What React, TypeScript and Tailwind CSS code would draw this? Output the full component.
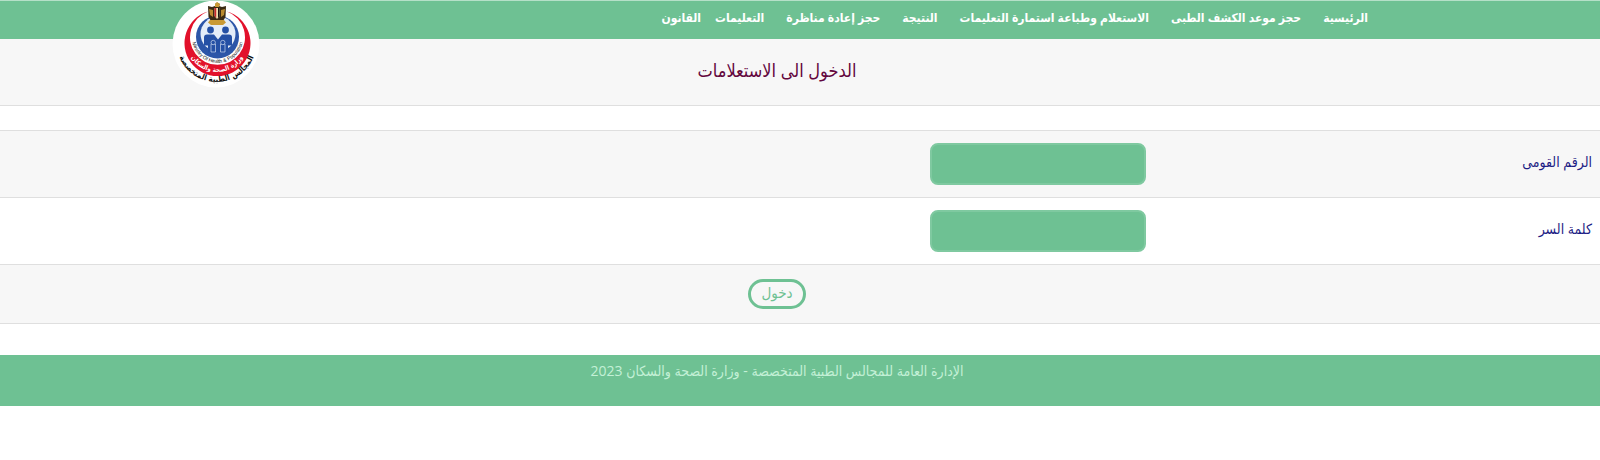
const links = [
  "الرئيسية",
  "حجز موعد الكشف الطبى",
  "الاستعلام وطباعة استمارة التعليمات",
  "النتيجة",
  "حجز إعادة مناظرة",
  "التعليمات",
];

function Logo() {
  return (
    <svg viewBox="0 0 88 88" className="size-[88px]" role="img" aria-label="المجالس الطبية المتخصصة">
      <defs>
        <path id="outer" d="M4.5 41 A40 40 0 0 0 84.5 41" />
        <path id="ribbon" d="M15 42 A30 29 0 0 0 75 42" />
        <path id="ministry" d="M19.500 35 A26 27 0 0 0 71.500 35" />
      </defs>
      <circle cx="44" cy="43" r="43.5" fill="#fff" />

      {/* red crescent */}
      <path d="M36 10.500 A33 33 0 1 0 55 10.500 A27.500 27.500 0 1 1 36 10.500Z" fill="#e2112b" />

      {/* blue crescent and disc */}
      <circle cx="45.500" cy="36" r="21.500" fill="#2c56a8" />
      <circle cx="46" cy="33" r="17.500" fill="#e4edf8" />
      <g fill="#2450a5">
        <circle cx="38.500" cy="29" r="3.400" />
        <circle cx="53.500" cy="29" r="3.400" />
        <path d="M35 33.500h7l4 5 4-5h7q3 0 3 3v8h-4v7H36v-7h-4v-8q0-3 3-3z" />
      </g>
      <g fill="#2450a5" stroke="#e4edf8" strokeWidth="0.600">
        <path d="M39 43h4.500v8H39zM48.500 43H53v8h-4.500z" />
        <circle cx="41.200" cy="41.500" r="2.200" />
        <circle cx="50.800" cy="41.500" r="2.200" />
      </g>

      {/* eagle */}
      <path d="M36 5 40 6 43 5 43 3 45 1.500 48 3 47 5 50 6 54 5 53.500 16 51 20 48 19 42 19 39 20 36.500 16Z" fill="#3a2a14" />
      <path d="M43 3 45 1 48 3 47 6H43zM38 19h14l2 2.500-3 2.500H39l-3-2.500z" fill="#c99a35" />
      <path d="M37 8l4 1v7l-3-2zM53 8l-4 1v7l3-2z" fill="#b8892f" />
      <path d="M42.500 7h5v8L45 18l-2.500-3z" fill="#f0dfb0" />
      <path d="M42.500 7h1.700v10l-1.700-2z" fill="#c8262b" />
      <path d="M46 7h1.500v8L46 17z" fill="#171310" />

      <g textAnchor="middle" fontFamily="'DejaVu Sans Condensed', 'DejaVu Sans', sans-serif">
        <text fontSize="5" fill="#111" fontFamily="'Liberation Sans', sans-serif">
          <textPath href="#ministry" startOffset="50%">Ministry Of Health &amp; Population</textPath>
        </text>
        <text fontSize="6.500" fontWeight="700" fill="#fff" direction="rtl">
          <textPath href="#ribbon" startOffset="50%">وزارة الصحة والسكان</textPath>
        </text>
        <text fontSize="8" fontWeight="700" fill="#111" direction="rtl">
          <textPath href="#outer" startOffset="50%">المجالس الطبية المتخصصة</textPath>
        </text>
      </g>
    </svg>
  );
}

function Field({ id, label, type }: { id: string; label: string; type: string }) {
  return (
    <div className="flex items-center border-b border-[#dfdfdf] py-3 odd:bg-[#f7f7f7]">
      <label htmlFor={id} className="w-[446px] shrink-0 px-2 pb-1 text-sm text-[#1c1c84]">
        {label}
      </label>
      <div className="px-2">
        <input
          id={id}
          type={type}
          className="block h-[42px] w-[216px] rounded-lg border-2 border-[#7fc9a0] bg-[#6ec193] px-3 text-white outline-none"
        />
      </div>
    </div>
  );
}

export default function App() {
  return (
    <div
      dir="rtl"
      className="bg-white font-['Open_Sans','DejaVu_Sans_Condensed','DejaVu_Sans',sans-serif]"
    >
      <header className="relative border-t border-[#b5e0c8] bg-[#6ec193]">
        <nav className="flex items-center gap-[22px] pt-[7px] pr-[232px] pb-[11px] text-xs leading-5 font-bold whitespace-nowrap text-white">
          {links.map((l) => (
            <a key={l} href="#">
              {l}
            </a>
          ))}
          <a href="#" className="-mr-2">
            القانون
          </a>
        </nav>
        <a href="#" className="absolute top-0 left-[172px]">
          <Logo />
        </a>
      </header>

      <h1 className="border-b border-[#dfdfdf] bg-[#f7f7f7] pt-[17px] pr-[46px] pb-[21px] text-center text-lg leading-7 text-[#63063d]">
        الدخول الى الاستعلامات
      </h1>

      <form className="mt-6 border-t border-[#dfdfdf]" onSubmit={(e) => e.preventDefault()}>
        <Field id="nid" label="الرقم القومى" type="text" />
        <Field id="password" label="كلمة السر" type="password" />
        <div className="flex justify-center border-b border-[#dfdfdf] bg-[#f7f7f7] py-3.5 pr-[46px]">
          <button
            type="submit"
            className="h-[30px] rounded-full border-3 border-[#6ec193] px-2.5 pb-1 text-[15px] leading-5 text-[#6ec193]"
          >
            دخول
          </button>
        </div>
      </form>

      <footer className="mt-[31px] bg-[#6ec193] pt-1.5 pr-[46px] pb-[25px] text-center text-sm text-[#c3f0d6]">
        الإدارة العامة للمجالس الطبية المتخصصة - وزارة الصحة والسكان 2023
      </footer>
    </div>
  );
}
